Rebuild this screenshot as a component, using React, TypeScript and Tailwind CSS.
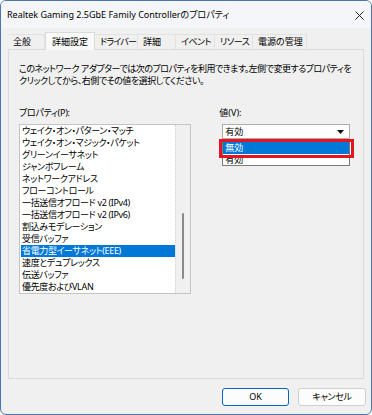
import React from 'react';

const items = [
  'ウェイク・オン・パターン・マッチ',
  'ウェイク・オン・マジック・パケット',
  'グリーンイーサネット',
  'ジャンボフレーム',
  'ネットワークアドレス',
  'フローコントロール',
  '一括送信オフロード v2 (IPv4)',
  '一括送信オフロード v2 (IPv6)',
  '割込みモデレーション',
  '受信バッファ',
  '省電力型イーサネット(EEE)',
  '速度とデュプレックス',
  '伝送バッファ',
  '優先度およびVLAN',
];

const tabs = [
  { label: '全般', w: 'w-[37px]', track: '' },
  { label: '詳細設定', w: 'w-[50px]', track: '', active: true },
  { label: 'ドライバー', w: 'w-[43px]', track: 'tracking-[-0.8px]' },
  { label: '詳細', w: 'w-[38px]', track: '' },
  { label: 'イベント', w: 'w-[39px]', track: 'tracking-[-0.5px]' },
  { label: 'リソース', w: 'w-[38px]', track: 'tracking-[-0.5px]' },
  { label: '電源の管理', w: 'w-[54px]', track: '' },
];

export default function App() {
  return (
    <div className="w-[372px] h-[415px] flex flex-col border border-[#4776b0] rounded-[6px] bg-[#f0f0f0] text-[9px] text-black overflow-hidden font-['Noto_Sans','Noto_Sans_CJK_JP',sans-serif] [font-feature-settings:'palt']">
      {/* Title bar */}
      <div className="h-[27px] shrink-0 flex items-center justify-between pl-[6px] pr-[7px] bg-[#f4f6f9]">
        <span className="whitespace-nowrap leading-[12px]">Realtek Gaming 2.5GbE Family Controllerのプロパティ</span>
        <svg width="9" height="9" viewBox="0 0 9 9" className="mt-[1px]">
          <path d="M0.5 0.5 L8.5 8.5 M8.5 0.5 L0.5 8.5" stroke="#222" strokeWidth="1" />
        </svg>
      </div>

      {/* Tabs */}
      <div className="flex items-end pl-[7px] h-[21px] shrink-0">
        {tabs.map((t) =>
          t.active ? (
            <div
              key={t.label}
              className={`${t.w} h-[18px] -mb-[1px] z-10 flex items-center pl-[6px] leading-[12px] whitespace-nowrap bg-[#f9f9f9] border border-b-0 border-[#dadada]`}
            >
              {t.label}
            </div>
          ) : (
            <div
              key={t.label}
              className={`${t.w} ${t.track} h-[15px] flex items-center pl-[5px] leading-[12px] whitespace-nowrap overflow-hidden bg-[#f0f0f0] border-t border-r border-[#e2e2e2]`}
            >
              {t.label}
            </div>
          )
        )}
      </div>

      {/* Panel */}
      <div className="mx-[7px] h-[330px] shrink-0 border border-[#dadada] bg-[#f0f0f0] flex flex-col px-[10px] pt-[13px]">
        <div className="h-[12px] leading-[12px] whitespace-nowrap tracking-[-0.5px]">
          このネットワーク アダプターでは次のプロパティを利用できます。左側で変更するプロパティを
        </div>
        <div className="h-[12px] leading-[12px] whitespace-nowrap tracking-[-0.5px]">
          クリックしてから、右側でその値を選択してください。
        </div>

        <div className="flex mt-[20px] gap-[28px]">
          {/* Left column */}
          <div className="flex flex-col w-[174px]">
            <div className="leading-[12px] h-[13px] whitespace-nowrap tracking-[-0.3px]">プロパティ(P):</div>
            <div className="mt-[4px] h-[170px] border border-[#c4c4c4] bg-white flex overflow-hidden">
              <div className="flex-1 flex flex-col pl-[1px] tracking-[-0.35px]">
                {items.map((it) =>
                  it === '省電力型イーサネット(EEE)' ? (
                    <div key={it} className="h-[12px] shrink-0 leading-[12px] pl-[1px] bg-[#0078d7] text-white whitespace-nowrap">
                      {it}
                    </div>
                  ) : (
                    <div key={it} className="h-[12px] shrink-0 leading-[12px] pl-[1px] whitespace-nowrap">
                      {it}
                    </div>
                  )
                )}
              </div>
              <div className="w-[15px] bg-[#f0f0f0] border-l border-dotted border-[#d4d4d4] flex justify-center pt-[88px]">
                <div className="w-[2px] h-[66px] bg-[#8a8a8a] rounded-full" />
              </div>
            </div>
          </div>

          {/* Right column */}
          <div className="flex flex-col w-[135px]">
            <div className="leading-[12px] h-[13px] whitespace-nowrap">値(V):</div>
            <div className="relative mt-[4px] ml-[3px] w-[128px]">
              <div className="h-[15px] border border-[#adadad] bg-white flex items-center justify-between pl-[2px] pr-[5px] leading-[12px]">
                <span>有効</span>
                <svg width="7" height="4" viewBox="0 0 7 4">
                  <path d="M0 0 L7 0 L3.5 4 Z" fill="#111" />
                </svg>
              </div>
              {/* dropdown popup */}
              <div className="absolute left-0 top-[15px] w-[128px] h-[27px] bg-white border border-t-0 border-[#7a7a7a] flex flex-col pt-[3px]">
                <div className="h-[12px] leading-[12px] pl-[2px] bg-[#0078d7] text-white">無効</div>
                <div className="h-[11px] leading-[12px] pl-[2px] overflow-hidden">有効</div>
              </div>
              {/* highlight frame */}
              <div className="absolute -left-[3px] top-[15px] w-[135px] h-[19px] border-[3px] border-[#e4151f]" />
            </div>
          </div>
        </div>
      </div>

      {/* Buttons */}
      <div className="flex justify-end gap-[9px] pr-[5px] mt-[9px]">
        <button className="w-[67px] h-[18px] rounded-[3px] border border-[#0067c0] bg-[#fcfcfc] text-[9px] leading-[12px]">
          OK
        </button>
        <button className="w-[68px] h-[18px] rounded-[3px] border border-[#d0d0d0] bg-[#fcfcfc] text-[9px] leading-[12px] tracking-[-0.3px]">
          キャンセル
        </button>
      </div>
    </div>
  );
}
